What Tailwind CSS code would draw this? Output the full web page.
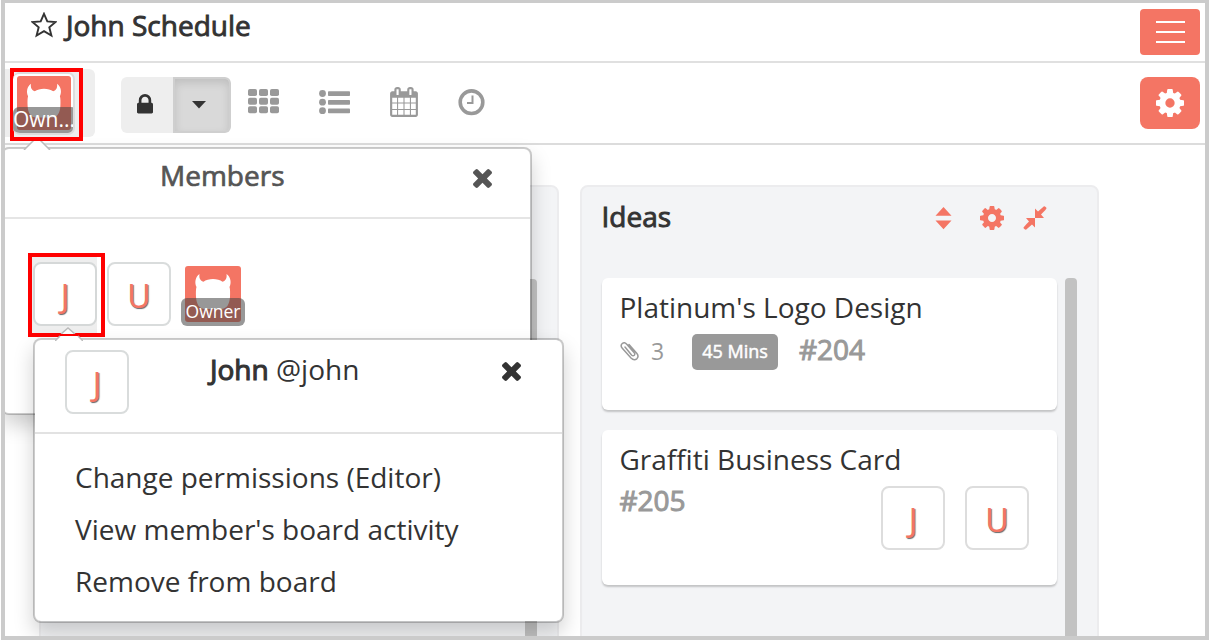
<!DOCTYPE html>
<html lang="en">
<head>
<meta charset="utf-8">
<title>John Schedule</title>
<script src="https://cdn.jsdelivr.net/npm/@tailwindcss/browser@4"></script>
</head>
<body class="bg-white font-['Open_Sans','Noto_Sans',sans-serif] text-[#333]">
<svg class="hidden">
  <symbol id="cog" viewBox="128 128 1536 1536"><path d="M1152 896q0-106-75-181t-181-75-181 75-75 181 75 181 181 75 181-75 75-181zm512-109v222q0 12-8 23t-20 13l-185 28q-19 54-39 91 35 50 107 138 10 12 10 25t-9 23q-27 37-99 108t-94 71q-12 0-26-9l-138-108q-44 23-91 38-16 136-29 186-7 28-36 28h-222q-14 0-24.5-8.5t-11.5-21.5l-28-184q-49-16-90-37l-141 107q-10 9-25 9-14 0-25-11-126-114-165-168-7-10-7-23 0-12 8-23 15-21 51-66.5t54-70.5q-27-50-41-99l-183-27q-13-2-21-12.5t-8-23.5v-222q0-12 8-23t19-13l186-28q14-46 39-92-40-57-107-138-10-12-10-24 0-10 9-23 26-36 98.5-107.5t94.5-71.5q13 0 26 10l138 107q44-23 91-38 16-136 29-186 7-28 36-28h222q14 0 24.5 8.5t11.5 21.5l28 184q49 16 90 37l142-107q9-9 24-9 13 0 25 10 129 119 165 170 7 8 7 22 0 12-8 23-15 21-51 66.5t-54 70.5q26 50 41 98l183 28q13 2 21 12.5t8 23.5z"/></symbol>
  <symbol id="times" viewBox="302 366 1188 1188"><path d="M1490 1322q0 40-28 68l-136 136q-28 28-68 28t-68-28l-294-294-294 294q-28 28-68 28t-68-28l-136-136q-28-28-28-68t28-68l294-294-294-294q-28-28-28-68t28-68l136-136q28-28 68-28t68 28l294 294 294-294q28-28 68-28t68 28l136 136q28 28 28 68t-28 68l-294 294 294 294q28 28 28 68z"/></symbol>
  <symbol id="devil" viewBox="0 0 56 56"><rect width="56" height="56" rx="3" fill="#f47564"/><path d="M14.500 8C10 11 9.500 17 11.500 21C10.800 23 10.800 27 11 31C11.500 38 14 43 20 43H36C42 43 44.500 38 45 31C45.200 27 45.200 23 44.500 21C46.500 17 46 11 41.500 8C42 11 41.500 14.500 37.500 15.800C33 12.200 23 12.200 18.500 15.800C14.500 14.500 14 11 14.500 8Z" fill="#fff"/></symbol>
</svg>
<div class="relative ml-px flex h-[640px] w-[1208px] flex-col overflow-hidden border-x-4 border-t-[3px] border-b-4 border-[#cbcbcb] bg-white">

  <header class="flex h-[60px] shrink-0 items-start border-b-2 border-[#e0e0e0] pl-[26px] pr-[5px]">
    <svg class="mt-[9px] h-[26px] w-[26px]" viewBox="0 0 26 26" fill="none" stroke="#333" stroke-width="1.900"><path d="M13 1.800L16.300 9.400L24.600 10L18.300 15.300L20.400 23.600L13 19.200L5.600 23.600L7.700 15.300L1.400 10L9.700 9.400Z"/></svg>
    <h1 class="ml-[9px] mt-[3px] text-[28px]/[38px] [-webkit-text-stroke:0.9px_#333]">John Schedule</h1>
    <button class="ml-auto mt-[6px] flex h-[46px] w-[60px] flex-col items-center justify-center gap-2 rounded-[4px] bg-[#f47564]">
      <span class="h-[2px] w-[29px] bg-white"></span><span class="h-[2px] w-[29px] bg-white"></span><span class="h-[2px] w-[29px] bg-white"></span>
    </button>
  </header>

  <nav class="flex h-[82px] shrink-0 items-start border-b-2 border-[#dcdcdc] pr-[5px]">
    <div class="mt-[6px] h-[68px] w-[90px] rounded-r-[6px] bg-[#eee] pl-[5px]">
      <div class="relative z-30 -mt-px flex h-[73px] w-[73px] border-4 border-[#f00] bg-[#eee]">
        <div class="relative -ml-px mt-0 flex h-[63px] w-[62px] overflow-hidden rounded-[7px] border-2 border-l-0 border-[#ddd] bg-white">
          <svg class="ml-[4px] mt-[2px] h-[54px] w-[54px] shrink-0"><use href="#devil"/></svg>
          <span class="absolute left-0 bottom-[-2px] h-7 w-16 rounded-[6px] bg-[#444]/55 text-[21px]/[25px] text-white">Own...</span>
        </div>
      </div>
    </div>
    <div class="ml-[26px] mt-[14px] flex h-[56px] w-[110px] overflow-hidden rounded-[6px] bg-[#eee]">
      <div class="flex w-[52px] pl-4 pt-[17px]"><svg class="h-[19.500px] w-4" viewBox="320 128 1152 1408" fill="#333"><path d="M640 768h512v-192q0-106-75-181t-181-75-181 75-75 181v192zm832 96v576q0 40-28 68t-68 28h-960q-40 0-68-28t-28-68v-576q0-40 28-68t68-28h32v-192q0-184 132-316t316-132 316 132 132 316v192h32q40 0 68 28t28 68z"/></svg></div>
      <div class="flex w-[58px] rounded-r-[6px] border-2 border-[#cfcfcf] bg-[#d9d9d9] pl-[17px] pt-[22px] shadow-[inset_0_4px_8px_rgba(0,0,0,.12)]"><svg class="h-2 w-[14px]" viewBox="0 0 14 8" fill="#333"><path d="M0 0H14L7 7.600Z"/></svg></div>
    </div>
    <svg class="ml-[17px] mt-[26px] h-[25px] w-[31px]" viewBox="0 0 31 25" fill="#999"><g id="r"><rect width="9" height="7" rx="1.800"/><rect x="11" width="9" height="7" rx="1.800"/><rect x="22" width="9" height="7" rx="1.800"/></g><use href="#r" y="8.700"/><use href="#r" y="17.300"/></svg>
    <svg class="ml-10 mt-[27px] h-[25px] w-[31px]" viewBox="0 0 31 25" fill="#999"><g id="l"><circle cx="3.500" cy="3.500" r="3.400"/><rect x="9" y="1.200" width="22" height="4.800" rx=".8"/></g><use href="#l" y="8.700"/><use href="#l" y="17.200"/></svg>
    <svg class="ml-[39px] mt-6 h-[30px] w-[30px]" viewBox="0 0 1792 1792" fill="#999"><path d="M192 1664h288v-288h-288v288zm352 0h320v-288h-320v288zm-352-352h288v-320h-288v320zm352 0h320v-320h-320v320zm-352-384h288v-288h-288v288zm736 736h320v-288h-320v288zm-384-736h320v-288h-320v288zm768 736h288v-288h-288v288zm-384-352h320v-320h-320v320zm-352-864v-288q0-13-9.500-22.500t-22.500-9.500h-64q-13 0-22.500 9.500t-9.500 22.500v288q0 13 9.500 22.500t22.500 9.500h64q13 0 22.500-9.500t9.500-22.500zm736 864h288v-320h-288v320zm-384-384h320v-288h-320v288zm384 0h288v-288h-288v288zm32-480v-288q0-13-9.500-22.500t-22.500-9.500h-64q-13 0-22.500 9.500t-9.500 22.500v288q0 13 9.500 22.500t22.500 9.500h64q13 0 22.500-9.500t9.500-22.500zm384-64v1280q0 52-38 90t-90 38h-1408q-52 0-90-38t-38-90v-1280q0-52 38-90t90-38h128v-96q0-66 47-113t113-47h64q66 0 113 47t47 113v96h384v-96q0-66 47-113t113-47h64q66 0 113 47t47 113v96h128q52 0 90 38t38 90z"/></svg>
    <svg class="ml-[39px] mt-[26px] h-[27px] w-[27px]" viewBox="0 0 27 27" fill="none" stroke="#999"><circle cx="13.500" cy="13.200" r="11.300" stroke-width="3.600"/><path d="M14.500 6.500V14H9" stroke-width="2"/></svg>
    <button class="ml-auto mt-[14px] flex h-[52px] w-[60px] items-center justify-center rounded-[8px] bg-[#f47564]"><svg class="h-7 w-7" fill="#fff"><use href="#cog"/></svg></button>
  </nav>

  <main class="flex flex-1 gap-[21px] pl-[34px] pt-10">
    <section class="flex h-[470px] w-[520px] justify-end rounded-[8px] border-2 border-[#ececee] bg-[#f3f4f6] pr-5 pt-[92px]"><div class="w-3 rounded-t-[4px] bg-[#c2c2c2]"></div></section>
    <section class="h-[470px] w-[519px] rounded-[8px] border-2 border-[#ececee] bg-[#f3f4f6] pl-5">
      <div class="flex h-[91px] items-start">
        <h2 class="-ml-[0.500px] mr-[0.500px] mt-[10px] w-[333px] text-[28px]/[39px] [-webkit-text-stroke:0.9px_#333]">Ideas</h2>
        <svg class="mt-5 h-[23px] w-[17px]" viewBox="0 0 17 23" fill="#f47564"><path d="M8.500 0L16.500 8.700H.5ZM.5 13.500H16.500L8.500 22.200Z"/></svg>
        <svg class="ml-7 mt-[19px] h-6 w-6" fill="#f47564"><use href="#cog"/></svg>
        <svg class="ml-[19px] mt-[19px] h-6 w-6" viewBox="0 0 24 24" fill="#f47564"><path id="a" d="M12 12V2.500L15 5.400L21 .3Q22 0 23.600 2Q23.600 3 18 8.500L21 12Z"/><use href="#a" transform="rotate(180 12 12)"/></svg>
      </div>
      <div class="flex gap-2">
        <div class="w-[455px]">
          <article class="h-[132px] rounded-[6px] bg-white pl-[17.500px] pt-[10px] shadow-[0_2px_2px_rgba(0,0,0,.2)]">
            <h3 class="text-[28px]/[38px]">Platinum's Logo Design</h3>
            <div class="mt-[8px] flex items-start text-[#999]">
              <svg class="mt-[6px] h-[21px] w-[19px]" viewBox="0 0 19 21" fill="none" stroke="#999" stroke-width="1.500" stroke-linecap="round"><path d="M5 7L11.500 15Q13 16.500 14.300 15.300Q15.400 14 14 12.500L7 4.500Q4.500 1.600 2.300 3.500Q0 5.500 2.300 8.200L11 18Q14 21 16.800 18.800Q19.300 16.500 16.700 13.300L9 4.500"/></svg>
              <span class="ml-[12.500px] w-[41px] text-[23px]/[34px]">3</span>
              <span class="h-9 w-[86px] rounded-[5px] bg-[#999] text-center text-[18px]/[34px] text-white [-webkit-text-stroke:0.5px_#fff]">45 Mins</span>
              <span class="-mt-1 ml-[21px] text-[28px]/[38px] [-webkit-text-stroke:1px_#999]">#204</span>
            </div>
          </article>
          <article class="mt-5 h-[155px] rounded-[6px] bg-white pl-[17.500px] pr-7 pt-[10px] shadow-[0_2px_2px_rgba(0,0,0,.2)]">
            <h3 class="text-[28px]/[38px]">Graffiti Business Card</h3>
            <div class="flex gap-5">
              <span class="mr-auto mt-[3px] text-[28px]/[38px] text-[#999] [-webkit-text-stroke:1px_#999]">#205</span>
              <span class="mt-[7.500px] h-16 w-16 rounded-[8px] border-2 border-[#ddd] text-center text-[32px]/[63px] text-[#f47564] [text-shadow:1px_1px_1px_#666]">J</span>
              <span class="mt-[7.500px] h-16 w-16 rounded-[8px] border-2 border-[#ddd] text-center text-[32px]/[63px] text-[#f47564] [text-shadow:1px_1px_1px_#666]">U</span>
            </div>
          </article>
        </div>
        <div class="h-[380px] w-3 rounded-t-[4px] bg-[#c2c2c2]"></div>
      </div>
    </section>
  </main>

  <div class="absolute -left-[4px] top-[144px] z-10 flex h-[268px] w-[531px] flex-col rounded-[8px] border-2 border-black/20 bg-white bg-clip-padding shadow-[0_10px_20px_rgba(0,0,0,.18)]">
    <svg class="absolute left-[20px] top-[-13px] h-[14px] w-[28px]" viewBox="0 0 28 14" fill="#fff" stroke="#bbb" stroke-width="1.500"><path d="M1 14L14 1L27 14"/></svg>
    <div class="flex h-[70px] items-start border-b-2 border-[#e5e5e5] text-[#555]">
      <h2 class="ml-[157px] mt-[7px] w-[313px] text-[28px]/[38px] [-webkit-text-stroke:0.7px_#555]">Members</h2>
      <svg class="mt-[19.500px] h-[19px] w-[19px]" fill="#555"><use href="#times"/></svg>
    </div>
    <div class="flex items-start pl-[25px] pt-[34px]">
      <div class="relative z-10 flex h-[84px] w-[77px] border-4 border-[#f00] bg-white">
        <div class="w-[65px] bg-[#eee] pl-px pt-[5px]"><div class="h-16 w-16 rounded-[8px] border-2 border-[#d5d8d8] bg-white text-center text-[32px]/[63px] text-[#f47564] [text-shadow:1px_1px_1px_#666]">J</div></div>
        <svg class="absolute left-[22px] top-[70px] h-[7px] w-[28px]" viewBox="0 0 28 7" fill="#fff" stroke="#bbb" stroke-width="1.500"><path d="M7 7L14 1L21 7"/></svg>
      </div>
      <div class="ml-[2px] mt-[9px] h-16 w-16 rounded-[8px] border-2 border-[#d9dcdc] text-center text-[32px]/[63px] text-[#f47564] [text-shadow:1px_1px_1px_#666]">U</div>
      <div class="relative ml-[10px] mt-[9px] h-16 w-16 pl-1 pt-1"><svg class="h-14 w-14"><use href="#devil"/></svg><span class="absolute bottom-0 left-0 h-7 w-16 rounded-[6px] bg-[#444]/55 text-center text-[17.500px]/[27px] text-white">Owner</span></div>
    </div>
  </div>

  <div class="absolute left-[28px] top-[335px] z-20 h-[285px] w-[531px] rounded-[8px] border-2 border-black/20 bg-white bg-clip-padding shadow-[0_10px_20px_rgba(0,0,0,.18)]">
    <svg class="absolute left-[20px] top-[-5px] h-[6px] w-[28px]" viewBox="0 0 28 6" fill="#fff" stroke="#bbb" stroke-width="1.500"><path d="M5 1H23L28 6H0Z" stroke="none"/><path d="M5 1L0 6M23 1L28 6"/></svg>
    <div class="flex h-[94px] items-start border-b-2 border-[#e2e2e2] pl-[30px] pt-[10px]">
      <div class="h-16 w-16 rounded-[8px] border-2 border-[#d9dcdc] text-center text-[32px]/[63px] text-[#f47564] [text-shadow:1px_1px_1px_#666]">J</div>
      <div class="ml-[81px] w-[292px] text-[28px]/[38px]"><b class="font-normal [-webkit-text-stroke:1.100px_#333]">John</b> @john</div>
      <svg class="mt-3 h-[19px] w-[19px]" fill="#333"><use href="#times"/></svg>
    </div>
    <ul class="pl-10 pt-[17px] text-[28px]/[52px]"><li>Change permissions (Editor)</li><li>View member's board activity</li><li>Remove from board</li></ul>
  </div>
</div>
</body>
</html>
